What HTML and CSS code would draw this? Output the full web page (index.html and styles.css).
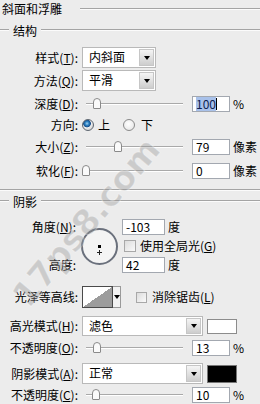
FILE: index.html
```html
<!DOCTYPE html>
<html lang="zh">
<head>
    <meta charset="UTF-8">
    <meta name="viewport" content="width=device-width, initial-scale=1.0">
    <title>斜面和浮雕</title>
    <link rel="stylesheet" href="styles.css">
</head>
<body>
    <div class="panel">
        <div class="title"><span>斜面和浮雕</span><i class="rule"></i></div>

        <div class="head h-struct"><i class="rule lead"></i><span>结构</span><i class="rule"></i></div>

        <div class="row r-style">
            <label class="lbl">样式(<u>T</u>):</label>
            <div class="select short"><span class="val">内斜面</span><b class="btn"></b></div>
        </div>
        <div class="row r-method">
            <label class="lbl">方法(<u>Q</u>):</label>
            <div class="select short"><span class="val">平滑</span><b class="btn"></b></div>
        </div>
        <div class="row r-depth">
            <label class="lbl">深度(<u>D</u>):</label>
            <div class="slider"><i class="track"></i><b class="thumb" style="left: 11px"></b></div>
            <div class="num"><span class="picked">100</span><i class="caret"></i></div>
            <span class="unit">%</span>
        </div>
        <div class="row r-dir">
            <label class="lbl">方向:</label>
            <i class="radio on"></i><span class="opt">上</span>
            <i class="radio r2"></i><span class="opt o2">下</span>
        </div>
        <div class="row r-size">
            <label class="lbl">大小(<u>Z</u>):</label>
            <div class="slider"><i class="track"></i><b class="thumb" style="left: 32px"></b></div>
            <div class="num">79</div>
            <span class="unit">像素</span>
        </div>
        <div class="row r-soft">
            <label class="lbl">软化(<u>F</u>):</label>
            <div class="slider"><i class="track"></i><b class="thumb" style="left: 0px"></b></div>
            <div class="num">0</div>
            <span class="unit">像素</span>
        </div>

        <i class="rule divider"></i>

        <div class="head h-shadow"><i class="rule lead"></i><span>阴影</span><i class="rule"></i></div>

        <div class="angle">
            <label class="lbl a-lbl">角度(<u>N</u>):</label>
            <div class="dial">
                <svg width="32" height="32" viewBox="0 0 32 32">
                    <rect x="15" y="15" width="3" height="3" fill="#000"/>
                    <path d="M14 22.5h5M16.5 20v5" stroke="#222" stroke-width="1"/>
                </svg>
            </div>
            <div class="a-ctl a-1"><div class="num wide">-103</div><span class="unit">度</span></div>
            <div class="a-ctl a-2"><i class="check"></i><span class="opt">使用全局光(<u>G</u>)</span></div>
            <label class="lbl a-lbl a-3">高度:</label>
            <div class="a-ctl a-4"><div class="num wide">42</div><span class="unit">度</span></div>
        </div>

        <div class="row r-contour">
            <label class="lbl">光泽等高线:</label>
            <div class="contour"><i class="curve"></i><b class="drop"></b></div>
            <i class="check c2"></i><span class="opt">消除锯齿(<u>L</u>)</span>
        </div>
        <div class="row r-hmode">
            <label class="lbl">高光模式(<u>H</u>):</label>
            <div class="select long"><span class="val">滤色</span><b class="btn"></b></div>
            <i class="swatch white"></i>
        </div>
        <div class="row r-op1">
            <label class="lbl">不透明度(<u>O</u>):</label>
            <div class="slider"><i class="track"></i><b class="thumb" style="left: 11px"></b></div>
            <div class="num">13</div>
            <span class="unit">%</span>
        </div>
        <div class="row r-smode">
            <label class="lbl">阴影模式(<u>A</u>):</label>
            <div class="select long"><span class="val">正常</span><b class="btn"></b></div>
            <i class="swatch black"></i>
        </div>
        <div class="row r-op2">
            <label class="lbl">不透明度(<u>C</u>):</label>
            <div class="slider"><i class="track"></i><b class="thumb" style="left: 10px"></b></div>
            <div class="num">10</div>
            <span class="unit">%</span>
        </div>

        <div class="wm">17ps8.com</div>
    </div>
</body>
</html>
```

FILE: styles.css
```css
* {
    box-sizing: border-box;
}
body {
    margin: 0;
    background-color: #ececec;
    font: 12px/16px "Noto Sans CJK SC", sans-serif;
    color: #000;
}
.panel {
    position: relative;
    width: 260px;
    height: 404px;
    overflow: hidden;
}
u {
    text-decoration: underline;
    text-underline-offset: 1px;
}
.rule {
    display: block;
    flex: 1;
    height: 2px;
    border-top: 1px solid #a4a4a4;
    border-bottom: 1px solid #fbfbfb;
}
.title {
    display: flex;
    align-items: center;
    height: 18px;
    padding-left: 2px;
}
.title .rule {
    margin-left: 18px;
}
.head {
    display: flex;
    align-items: center;
    height: 18px;
}
.head .rule {
    margin-bottom: 2px;
}
.head .lead {
    flex: none;
    width: 9px;
}
.head span {
    margin: 0 4px;
}
.h-struct { margin-top: 4px; }
.divider { margin-top: 9px; flex: none; }
.h-shadow { margin-top: 2px; }

.row {
    display: flex;
    align-items: center;
}
.lbl {
    flex: none;
    width: 78px;
    margin-right: 4px;
    text-align: right;
    white-space: nowrap;
}
.r-style { margin-top: 7px; height: 21px; }
.r-method { margin-top: 2px; height: 21px; }
.r-depth { margin-top: 4px; height: 18px; }
.r-dir { margin-top: 3px; height: 18px; }
.r-size { margin-top: 4px; height: 18px; }
.r-soft { margin-top: 6px; height: 18px; }
.r-contour { margin-top: 12px; height: 22px; }
.r-hmode { margin-top: 8px; height: 20px; }
.r-op1 { margin-top: 4px; height: 16px; }
.r-smode { margin-top: 7px; height: 21px; }
.r-op2 { margin-top: 3px; height: 16px; }

/* dropdowns */
.select {
    display: flex;
    height: 21px;
    background-color: #fff;
    border: 1px solid #b9b9b9;
}
.select.short { width: 74px; }
.select.long { width: 121px; height: 20px; }
.r-smode .select { height: 21px; }
.select .val {
    flex: 1;
    padding-left: 6px;
    line-height: 18px;
}
.btn {
    display: flex;
    align-items: center;
    justify-content: center;
    width: 15px;
    margin: 1px;
    background: linear-gradient(#f5f5f5, #cdcdcd);
    border: 1px solid #c6c6c6;
}
.btn::after, .drop::after {
    content: "";
    border-top: 4px solid #000;
    border-left: 3.5px solid transparent;
    border-right: 3.5px solid transparent;
}

/* sliders */
.slider {
    position: relative;
    display: flex;
    align-items: center;
    width: 104px;
    height: 16px;
    margin-right: 6px;
}
.track {
    display: block;
    flex: 1;
    height: 2px;
    margin: 0 3px 0 4px;
    border-top: 1px solid #a9a9a9;
    border-bottom: 1px solid #fff;
}
.thumb {
    position: absolute;
    top: 2px;
    width: 8px;
    height: 11px;
    background-color: #fafafa;
    border: 1px solid #8a8a8a;
    border-radius: 4px 4px 1px 1px;
}

/* number fields */
.num {
    display: flex;
    align-items: center;
    width: 38px;
    height: 16px;
    padding-left: 3px;
    background-color: #fff;
    border: 1px solid #a3a8b0;
    line-height: 14px;
}
.num.wide { width: 43px; }
.picked {
    background-color: #a8c1ea;
    color: #0d1f52;
}
.caret {
    display: block;
    width: 1px;
    height: 12px;
    background-color: #000;
}
.unit {
    margin-left: 3px;
}

/* radios and checks */
.radio {
    display: block;
    flex: none;
    width: 12px;
    height: 12px;
    border-radius: 50%;
    border: 1px solid #8a8a8a;
    background: radial-gradient(circle at 45% 40%, #fff, #e2e2e2);
}
.radio.on {
    background: radial-gradient(circle at 40% 35%, #9fd0f0 0, #2a7fc0 2px, #1a4f8a 3.5px, #f0f0f0 4.2px, #d9d9d9 6px);
    border-color: #5e6670;
}
.radio.r2 { margin-left: 13px; }
.opt { margin-left: 4px; white-space: nowrap; }
.o2 { margin-left: 6px; }
.check {
    display: block;
    flex: none;
    width: 12px;
    height: 12px;
    border: 1px solid #a8a8a8;
    background: linear-gradient(135deg, #dcdcdc, #fafafa);
}

/* angle block */
.angle {
    display: grid;
    grid-template-columns: 81px 41px 1fr;
    grid-template-rows: 18px 18px 18px;
    row-gap: 1px;
    margin-top: 7px;
}
.a-lbl {
    width: auto;
    margin: 0;
    padding-right: 5px;
    align-self: center;
}
.a-3 { grid-row: 3; grid-column: 1; }
.dial {
    grid-column: 2;
    grid-row: 1 / 4;
    align-self: center;
    width: 37px;
    height: 37px;
    border-radius: 50%;
    border: 2px solid #6a707c;
    background-color: #f4f4f4;
}
.dial svg { display: block; }
.a-ctl {
    display: flex;
    align-items: center;
    grid-column: 3;
}
.a-1 { grid-row: 1; }
.a-2 { grid-row: 2; padding-left: 2px; }
.a-4 { grid-row: 3; }

/* contour */
.contour {
    display: flex;
    height: 22px;
}
.curve {
    display: block;
    width: 31px;
    border: 1px solid #4a4a4a;
    background: linear-gradient(to bottom right, #fff 50%, #9c9c9c 50%);
}
.drop {
    display: flex;
    align-items: center;
    justify-content: center;
    width: 8px;
    background-color: #f2f2f2;
    border: 1px solid #9a9a9a;
    border-left: none;
}
.check.c2 {
    width: 11px;
    height: 11px;
    margin-left: 15px;
}
.r-contour .opt { margin-left: 5px; }

/* colour swatches */
.swatch {
    display: block;
    width: 30px;
    margin-left: 4px;
    border: 1px solid #8c8c8c;
}
.swatch.white { height: 15px; background-color: #fff; }
.swatch.black { height: 18px; background-color: #000; border-color: #777; }

/* watermark */
.wm {
    position: absolute;
    left: 86px;
    top: 222px;
    transform: translate(-50%, -50%) rotate(-50deg);
    font: bold 34px "DejaVu Sans", sans-serif;
    color: rgba(150, 150, 150, 0.4);
    -webkit-text-stroke: 1px rgba(255, 255, 255, 0.35);
    white-space: nowrap;
    pointer-events: none;
}
```
